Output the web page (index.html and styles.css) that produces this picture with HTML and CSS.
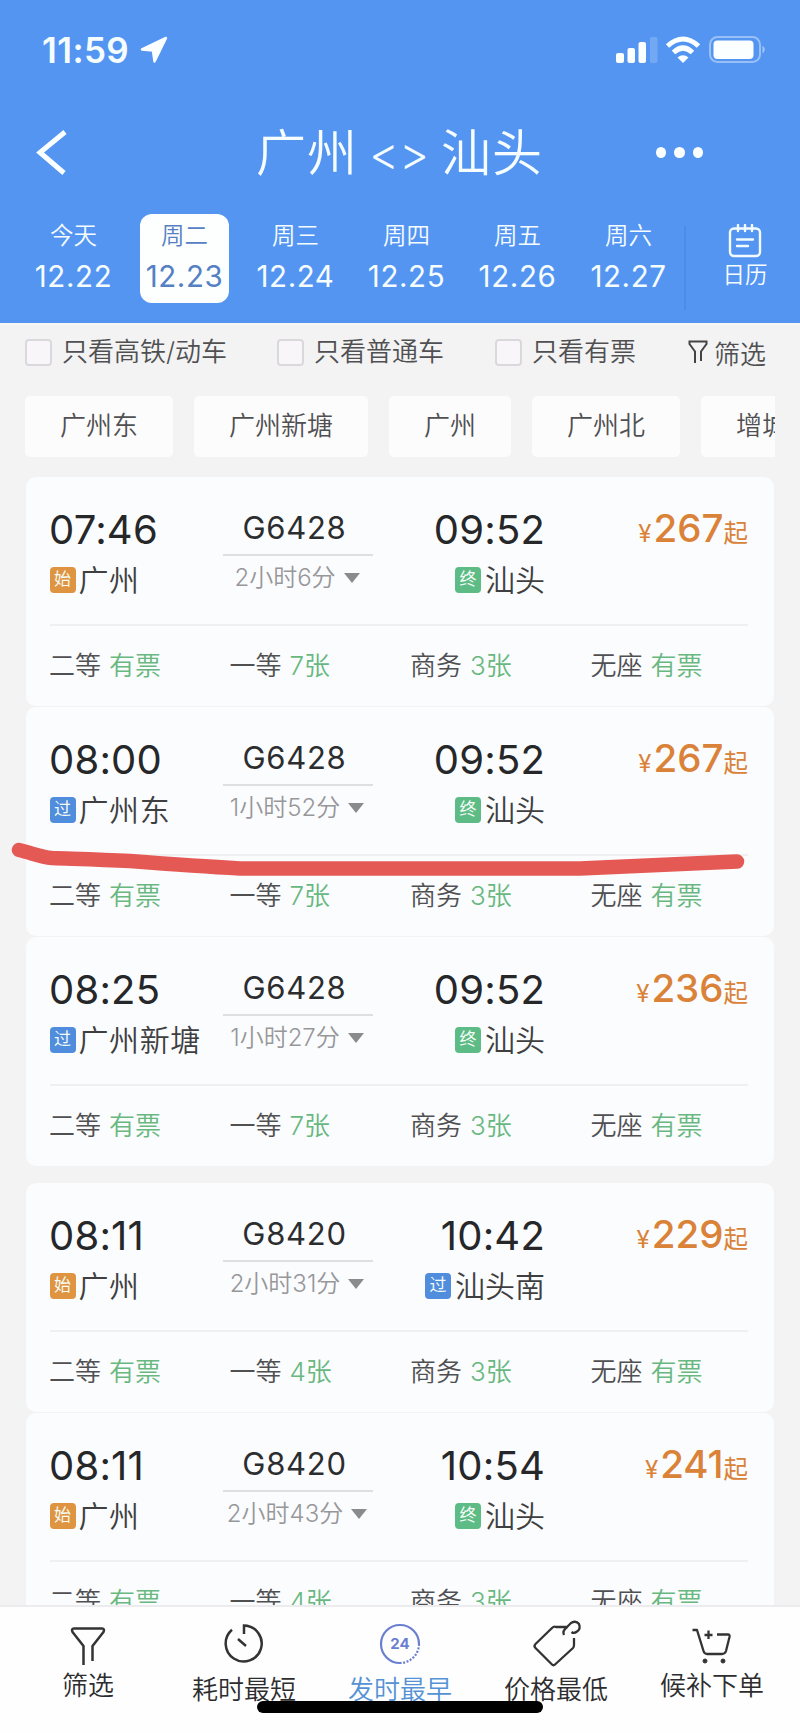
FILE: index.html
```html
<!DOCTYPE html>
<html lang="zh-CN">
<head>
  <meta charset="UTF-8">
  <meta name="viewport" content="width=device-width, initial-scale=1.0">
  <title>广州 - 汕头 车票查询</title>
  <link rel="stylesheet" href="styles.css">
</head>
<body>
  <header>
    <div class="status">
      <span class="clock">11:59</span>
      <svg class="location" width="28" height="28" viewBox="0 0 28 28"><path d="M26 2 L2 13.5 L13 14.5 L14.5 25.5 Z" fill="#fbffff" stroke="#fbffff" stroke-width="2.5" stroke-linejoin="round"/></svg>
      <svg class="signal" width="42" height="28" viewBox="0 0 42 28" fill="#fbffff">
        <rect x="0" y="17" width="8" height="10" rx="2"/>
        <rect x="11.5" y="12" width="7.5" height="15" rx="2"/>
        <rect x="22.5" y="6" width="7.5" height="21" rx="2"/>
        <rect x="34" y="1" width="7.5" height="26" rx="2" opacity=".18"/>
      </svg>
      <svg class="wifi" width="36" height="28" viewBox="0 0 36 28" fill="none" stroke="#fbffff" stroke-width="5">
        <path d="M2.5 10 Q18 -4 33.500 10"/>
        <path d="M8.500 16.500 Q18 7.500 27.500 16.500"/>
        <path d="M18 27 L12.500 21.500 Q18 17 23.500 21.500 Z" fill="#fbffff" stroke="none"/>
      </svg>
      <svg class="battery" width="57" height="28" viewBox="0 0 57 28">
        <rect x="1" y="1" width="50" height="25" rx="7.500" fill="none" stroke="#fff" stroke-width="2" opacity=".4"/>
        <rect x="4.500" y="4.500" width="40" height="18.500" rx="4" fill="#fbffff"/>
        <path d="M53.500 9.500 Q58 13.500 53.500 17.500 Z" fill="#fff" opacity=".45"/>
      </svg>
    </div>
    <div class="titlebar">
      <svg class="back" width="32" height="46" viewBox="0 0 32 46"><path d="M29 2 L4 22.500 L28 43" fill="none" stroke="#fbffff" stroke-width="5"/></svg>
      <h1>广州<span class="swap">&lt;&gt;</span>汕头</h1>
      <div class="more"><i></i><i></i><i></i></div>
    </div>
    <div class="dates">
      <div class="date"><span>今天</span><b>12.22</b></div>
      <div class="date active"><span>周二</span><b>12.23</b></div>
      <div class="date"><span>周三</span><b>12.24</b></div>
      <div class="date"><span>周四</span><b>12.25</b></div>
      <div class="date"><span>周五</span><b>12.26</b></div>
      <div class="date"><span>周六</span><b>12.27</b></div>
      <div class="calendar">
        <svg width="34" height="34" viewBox="0 0 34 34" fill="none" stroke="#f2fbff" stroke-width="2.400" stroke-linecap="round">
          <rect x="2" y="4.500" width="30" height="27.500" rx="4"/>
          <path d="M10 1 V7 M17 1 V7 M24 1 V7 M9 15.500 H25 M9 22 H20"/>
        </svg>
        <span>日历</span>
      </div>
    </div>
  </header>

  <div class="filters">
    <label class="check"><i></i>只看高铁/动车</label>
    <label class="check"><i></i>只看普通车</label>
    <label class="check"><i></i>只看有票</label>
    <div class="sift">
      <svg width="20" height="24" viewBox="0 0 20 24" fill="none" stroke="#444" stroke-width="2"><path d="M7 23 V11.500 L1.500 4 V1.500 H18.500 V4 L13 11.500 V21"/></svg>
      筛选
    </div>
  </div>

  <div class="chips">
    <div>广州东</div>
    <div>广州新塘</div>
    <div>广州</div>
    <div>广州北</div>
    <div>增城</div>
  </div>

  <main>
    <section class="card">
      <div class="trip">
        <div class="from">
          <div class="time">07:46</div>
          <div class="station"><em class="start">始</em>广州</div>
        </div>
        <div class="train">
          <div class="no">G6428</div>
          <div class="last">2小时6分<i></i></div>
        </div>
        <div class="to">
          <div class="time">09:52</div>
          <div class="station"><em class="end">终</em>汕头</div>
        </div>
        <div class="price"><small>¥</small>267<span>起</span></div>
      </div>
      <div class="seats">
        <div>二等<span>有票</span></div>
        <div>一等<span>7张</span></div>
        <div>商务<span>3张</span></div>
        <div>无座<span>有票</span></div>
      </div>
    </section>

    <section class="card">
      <div class="trip">
        <div class="from">
          <div class="time">08:00</div>
          <div class="station"><em class="pass">过</em>广州东</div>
        </div>
        <div class="train">
          <div class="no">G6428</div>
          <div class="last">1小时52分<i></i></div>
        </div>
        <div class="to">
          <div class="time">09:52</div>
          <div class="station"><em class="end">终</em>汕头</div>
        </div>
        <div class="price"><small>¥</small>267<span>起</span></div>
      </div>
      <div class="seats">
        <div>二等<span>有票</span></div>
        <div>一等<span>7张</span></div>
        <div>商务<span>3张</span></div>
        <div>无座<span>有票</span></div>
      </div>
      <!-- hand-drawn marker under this train -->
      <svg class="marker" width="760" height="50" viewBox="0 0 760 50"><path d="M19 20 C32 23 40 27 52 28 C80 29 100 29.500 130 31 C170 34 205 36.500 240 38.500 H580 L737 31.500" fill="none" stroke="#e55955" stroke-width="14.500" stroke-linecap="round" stroke-linejoin="round"/></svg>
    </section>

    <section class="card">
      <div class="trip">
        <div class="from">
          <div class="time">08:25</div>
          <div class="station"><em class="pass">过</em>广州新塘</div>
        </div>
        <div class="train">
          <div class="no">G6428</div>
          <div class="last">1小时27分<i></i></div>
        </div>
        <div class="to">
          <div class="time">09:52</div>
          <div class="station"><em class="end">终</em>汕头</div>
        </div>
        <div class="price"><small>¥</small>236<span>起</span></div>
      </div>
      <div class="seats">
        <div>二等<span>有票</span></div>
        <div>一等<span>7张</span></div>
        <div>商务<span>3张</span></div>
        <div>无座<span>有票</span></div>
      </div>
    </section>

    <section class="card group">
      <div class="trip">
        <div class="from">
          <div class="time">08:11</div>
          <div class="station"><em class="start">始</em>广州</div>
        </div>
        <div class="train">
          <div class="no">G8420</div>
          <div class="last">2小时31分<i></i></div>
        </div>
        <div class="to">
          <div class="time">10:42</div>
          <div class="station"><em class="pass">过</em>汕头南</div>
        </div>
        <div class="price"><small>¥</small>229<span>起</span></div>
      </div>
      <div class="seats">
        <div>二等<span>有票</span></div>
        <div>一等<span>4张</span></div>
        <div>商务<span>3张</span></div>
        <div>无座<span>有票</span></div>
      </div>
    </section>

    <section class="card">
      <div class="trip">
        <div class="from">
          <div class="time">08:11</div>
          <div class="station"><em class="start">始</em>广州</div>
        </div>
        <div class="train">
          <div class="no">G8420</div>
          <div class="last">2小时43分<i></i></div>
        </div>
        <div class="to">
          <div class="time">10:54</div>
          <div class="station"><em class="end">终</em>汕头</div>
        </div>
        <div class="price"><small>¥</small>241<span>起</span></div>
      </div>
      <div class="seats">
        <div>二等<span>有票</span></div>
        <div>一等<span>4张</span></div>
        <div>商务<span>3张</span></div>
        <div>无座<span>有票</span></div>
      </div>
    </section>
  </main>

  <footer>
    <div class="tab high">
      <svg width="48" height="50" viewBox="0 0 48 50" fill="none" stroke="#333" stroke-width="2.500" stroke-linejoin="round"><path d="M19.500 45 V26 L8.500 12 Q7 8.500 10 8.500 H38 Q41 8.500 39.500 12 L28.500 26 V41"/></svg>
      <span>筛选</span>
    </div>
    <div class="tab">
      <svg width="48" height="50" viewBox="0 0 48 50" fill="none" stroke="#333" stroke-width="2.500"><path d="M24 14 V5.500 A18 18 0 1 1 12 9.800 M18 19 L26 26"/></svg>
      <span>耗时最短</span>
    </div>
    <div class="tab active">
      <svg width="48" height="50" viewBox="0 0 48 50" fill="none" stroke="#6a7fd0" stroke-width="2.200">
        <path d="M24 43 A19 19 0 1 1 43 24"/>
        <path d="M43 24 A19 19 0 0 1 24 43" stroke-dasharray="2 1.500"/>
        <text x="24" y="29" text-anchor="middle">24</text>
      </svg>
      <span>发时最早</span>
    </div>
    <div class="tab">
      <svg width="48" height="50" viewBox="0 0 48 50" fill="none" stroke="#333" stroke-width="2.300" stroke-linejoin="round"><path d="M36 7 H24 Q22 6 20 8 L3.500 24 Q1.500 26 3.500 28 L20 44.500 Q21.500 46 23 44.500 L41 28 Q42 27 42 25 V18 M32 15 Q30 11 35 7 L39 3 Q44 0 47 4 Q49 9 45 11.500 Q42 14 39.500 12"/></svg>
      <span>价格最低</span>
    </div>
    <div class="tab high">
      <svg width="48" height="50" viewBox="0 0 48 50" fill="none" stroke="#333" stroke-width="2.300" stroke-linejoin="round"><path d="M4.500 10 H9 L15.500 31 Q16.500 34 19 34 H34 Q37 34 38 31 L41.500 17 Q42 14.500 40 14.500 H29 M20.500 10.500 V19 M16.500 15 H24.500"/><circle cx="17" cy="41" r="2" fill="#333" stroke-width="1"/><circle cx="35" cy="41" r="2" fill="#333" stroke-width="1"/></svg>
      <span>候补下单</span>
    </div>
    <div class="home"></div>
  </footer>
</body>
</html>
```
FILE: styles.css
```css
* {
  box-sizing: border-box;
}
body {
  margin: 0;
  width: 800px;
  height: 1733px;
  overflow: hidden;
  display: flex;
  flex-direction: column;
  background: #f3f3f4;
  font-family: Inter, "Noto Sans CJK SC", sans-serif;
  font-weight: 350;
  font-size: 26px;
  color: #505052;
}
i, em {
  font-style: normal;
}

/* header */
header {
  flex: none;
  height: 323px;
  background: #5595f2;
  color: #f5fdff;
}
.status {
  display: flex;
  align-items: center;
  height: 100px;
  padding: 0 34px 0 42px;
}
.clock {
  width: 98px;
  font-size: 35px;
  font-weight: 600;
  letter-spacing: .4px;
}
.signal {
  margin-left: auto;
}
.wifi {
  margin: 0 8px 0 7px;
}
.titlebar {
  display: flex;
  align-items: center;
  height: 105px;
  padding: 0 97px 0 36px;
}
h1 {
  flex: 1;
  display: flex;
  align-items: center;
  margin: 0 0 0 188px;
  font-size: 50px;
  font-weight: 350;
  line-height: 70px;
  letter-spacing: 1px;
}
.swap {
  margin: 0 12px 0 11px;
  font-size: 46px;
  letter-spacing: 0;
}
.more {
  display: flex;
  gap: 8px;
}
.more i {
  width: 10.500px;
  height: 11px;
  border-radius: 50%;
  background: #fbffff;
}
.dates {
  display: flex;
  margin-top: 9px;
  padding-left: 18px;
}
.date {
  width: 111px;
  height: 89px;
  padding-top: 3px;
  text-align: center;
}
.date span {
  display: block;
  font-size: 23.500px;
  line-height: 38px;
}
.date b {
  display: block;
  font-size: 29.500px;
  font-weight: 400;
  letter-spacing: .6px;
  line-height: 42px;
}
.date.active {
  width: 89px;
  margin: 0 11px;
  border-radius: 12px;
  background: #fdfffe;
  color: #5581c4;
}
.calendar {
  flex: none;
  display: flex;
  flex-direction: column;
  align-items: center;
  width: 116px;
  height: 84px;
  margin-top: 12px;
  padding-left: 4px;
  border-left: 2px solid #4f8cea;
}
.calendar svg {
  margin-top: -2px;
}
.calendar span {
  font-size: 22.500px;
  line-height: 34px;
}

/* filters */
.filters {
  flex: none;
  display: flex;
  align-items: center;
  height: 60px;
  padding: 0 34px 4px 25px;
  border-top: 2px solid #f7f6f4;
}
.check {
  display: flex;
  align-items: center;
  line-height: 36px;
  white-space: nowrap;
}
.check i {
  width: 27px;
  height: 27px;
  margin-right: 10px;
  border: 2px solid #dbd8dd;
  border-radius: 4px;
  background: #f8f6f9;
}
.check:nth-child(1) {
  width: 252px;
}
.check:nth-child(2) {
  width: 218px;
}
.sift {
  display: flex;
  align-items: center;
  gap: 6px;
  margin-left: auto;
}
.chips {
  flex: none;
  display: flex;
  gap: 21px;
  width: 750px;
  margin: 13px 0 0 25px;
  overflow: hidden;
}
.chips div {
  flex: none;
  height: 61px;
  padding: 0 35px;
  border-radius: 5px;
  background: #fdfcfd;
  line-height: 60px;
}

/* train list */
main {
  flex: none;
  height: 1148px;
  padding: 20px 26px 0 26px;
  overflow: hidden;
}
.card {
  position: relative;
  height: 229px;
  margin-bottom: 1px;
  padding: 0 26px 0 24px;
  border-radius: 10px;
  background: #fbfcfe;
}
.card.group {
  margin-top: 17px;
}
.trip {
  display: grid;
  grid-template-columns: 173px 150px 172px 1fr;
  height: 149px;
  padding-top: 28px;
  border-bottom: 2px solid #eff0f2;
}
.time {
  color: #262729;
  font-size: 40px;
  font-weight: 400;
  letter-spacing: .2px;
  line-height: 49px;
}
.from .time {
  margin-left: -1px;
}
.station {
  display: flex;
  align-items: center;
  color: #3f3f41;
  font-size: 30px;
  letter-spacing: .6px;
  line-height: 52px;
}
.station em {
  flex: none;
  width: 26px;
  height: 26px;
  margin-right: 3px;
  border-radius: 4px;
  color: #f5fbf5;
  font-size: 17px;
  font-weight: 400;
  letter-spacing: 0;
  line-height: 25px;
  text-align: center;
}
.from .station {
  margin-left: -.500px;
}
.start {
  background: #de9440;
}
.pass {
  background: #508ddd;
}
.end {
  background: #5dbb85;
}
.to {
  text-align: right;
}
.to .station {
  justify-content: flex-end;
  letter-spacing: 0;
}
.to .station em {
  margin-right: 4px;
}
.train {
  text-align: center;
}
.no {
  height: 51px;
  padding-right: 7px;
  border-bottom: 2px solid #dedfe2;
  color: #2c2d2f;
  font-size: 31px;
  font-weight: 400;
  letter-spacing: .7px;
  line-height: 46px;
}
.last {
  padding-right: 2px;
  color: #97979a;
  font-size: 24px;
  line-height: 44px;
}
.last i {
  display: inline-block;
  margin-left: 8px;
  border: 8px solid transparent;
  border-top: 10px solid #8b8b8e;
  border-bottom: 0;
  vertical-align: 3px;
}
.price {
  color: #d98238;
  font-size: 38.500px;
  font-weight: 450;
  line-height: 46px;
  text-align: right;
  white-space: nowrap;
}
.price small {
  margin-right: 2px;
  font-size: 24px;
  font-weight: 400;
}
.price span {
  font-size: 24.500px;
  font-weight: 400;
}
.seats {
  display: grid;
  grid-template-columns: repeat(4, 180.500px);
  margin-left: -1px;
  line-height: 80px;
}
.seats span {
  margin-left: 8px;
  color: #68b87f;
}
.marker {
  position: absolute;
  top: 123px;
  left: -26px;
}

/* bottom bar */
footer {
  position: relative;
  flex: none;
  display: flex;
  height: 128px;
  padding: 0 10px;
  border-top: 2px solid #ececee;
  background: #fefefe;
  color: #2d2d2f;
}
.tab {
  display: flex;
  flex-direction: column;
  align-items: center;
  width: 156px;
  padding-top: 13px;
}
.tab svg {
  overflow: visible;
}
.tab span {
  line-height: 40px;
}
.tab.high span {
  margin-top: -4px;
}
.tab.active {
  color: #5592d4;
}
.tab text {
  fill: #6a7fd0;
  stroke: none;
  font-size: 15px;
  font-weight: 700;
}
.home {
  position: absolute;
  left: 257px;
  bottom: 20px;
  width: 286px;
  height: 12px;
  border-radius: 6px;
  background: #000;
}
```
